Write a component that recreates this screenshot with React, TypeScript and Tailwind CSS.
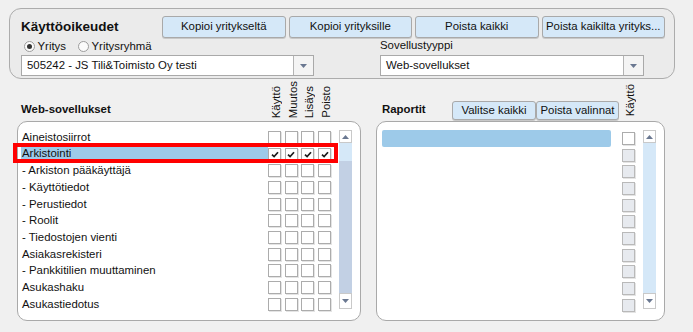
import React from "react";
import clsx from "clsx";

type AppRow = {
  name: string;
  selected?: boolean;
  checks?: boolean[];
};

const APP_ROWS: AppRow[] = [
  { name: "Aineistosiirrot" },
  { name: "Arkistointi", selected: true, checks: [true, true, true, true] },
  { name: "- Arkiston pääkäyttäjä" },
  { name: "- Käyttötiedot" },
  { name: "- Perustiedot" },
  { name: "- Roolit" },
  { name: "- Tiedostojen vienti" },
  { name: "Asiakasrekisteri" },
  { name: "- Pankkitilien muuttaminen" },
  { name: "Asukashaku" },
  { name: "Asukastiedotus" },
];

const RIGHTS = ["Käyttö", "Muutos", "Lisäys", "Poisto"];
const REPORT_ROWS = 11;

const CheckBox = ({ checked, disabled }: { checked?: boolean; disabled?: boolean }) => (
  <span
    className={clsx(
      "flex h-[13px] w-[13px] items-center justify-center border shadow-[1px_1px_0_#e4e4e4]",
      disabled ? "border-[#b9b9b9] bg-[#e7eaef]" : "border-[#acacac] bg-white"
    )}
  >
    {checked && (
      <svg width="8" height="7" viewBox="0 0 8 7">
        <path d="M1 3.6 L3.1 5.6 L7 1.2" fill="none" stroke="#1e1e1e" strokeWidth="1.7" />
      </svg>
    )}
  </span>
);

const Arrow = ({ up, color = "#6a7891" }: { up?: boolean; color?: string }) => (
  <svg width="7" height="4" viewBox="0 0 7 4">
    <path d={up ? "M0 4 L3.5 0 L7 4 Z" : "M0 0 L7 0 L3.5 4 Z"} fill={color} />
  </svg>
);

const Button = ({ label, className }: { label: string; className?: string }) => (
  <button
    className={clsx(
      "flex items-center justify-center whitespace-nowrap rounded-[3px] border border-[#a9a9a9] bg-[#d5e8f8] shadow-[0_1px_0_#c8c8c8]",
      className
    )}
  >
    {label}
  </button>
);

const Select = ({ value, className }: { value: string; className?: string }) => (
  <div className={clsx("flex h-[21px] border border-[#a9a9a9] bg-white", className)}>
    <span className="flex flex-1 items-center pl-[5px]">{value}</span>
    <span className="flex w-[20px] items-center justify-center border-l border-[#b4b4b4] bg-[#f4f4f4]">
      <Arrow />
    </span>
  </div>
);

const Radio = ({ checked, label }: { checked?: boolean; label: string }) => (
  <span className="flex items-center gap-[2.5px]">
    <span className="flex h-[11px] w-[11px] items-center justify-center rounded-full border border-[#9c9c9c] bg-[#fbfbfb]">
      {checked && <span className="h-[5px] w-[5px] rounded-full bg-[#333]" />}
    </span>
    {label}
  </span>
);

const VerticalHeader = ({ label }: { label: string }) => (
  <div className="flex w-[16.7px] items-end justify-center">
    <span className="rotate-180 leading-[9px] [writing-mode:vertical-rl]">{label}</span>
  </div>
);

const ScrollBar = ({ thumbFrom, thumbColor }: { thumbFrom: number; thumbColor: string }) => (
  <div className="flex w-[13px] flex-col">
    <span className="flex h-[13px] items-center justify-center border border-[#c9c9c9] bg-white">
      <Arrow up />
    </span>
    <div className="flex flex-1 flex-col bg-[#d5e8f8]">
      <div style={{ height: thumbFrom }} />
      <div className={clsx("flex-1", thumbColor)} />
    </div>
    <span className="flex h-[16px] items-center justify-center border border-[#c9c9c9] bg-white">
      <Arrow />
    </span>
  </div>
);

export default function App() {
  return (
    <div className="relative h-[332px] w-[693px] overflow-hidden bg-[#f0f0f0] font-['Liberation_Sans',Arial,sans-serif] text-[11.4px] text-[#111]">
      {/* top panel */}
      <div className="ml-[9px] mt-[8px] flex h-[71px] w-[666px] flex-col rounded-[12px] border border-[#acacac] bg-[#ebebeb] pl-[11px] pt-[7px]">
        <div className="flex h-[22px] items-center">
          <span className="w-[141px] text-[13.5px] font-bold">Käyttöoikeudet</span>
          <div className="flex h-full gap-[3px]">
            <Button label="Kopioi yritykseltä" className="w-[123.5px]" />
            <Button label="Kopioi yrityksille" className="w-[123.5px]" />
            <Button label="Poista kaikki" className="w-[123.5px]" />
            <Button label="Poista kaikilta yrityks..." className="w-[123.5px]" />
          </div>
        </div>
        <div className="flex h-[17px] items-center">
          <div className="ml-[3px] flex w-[356px] items-center gap-[12px]">
            <Radio checked label="Yritys" />
            <Radio label="Yritysryhmä" />
          </div>
          <span className="-mt-[2px]">Sovellustyyppi</span>
        </div>
        <div className="flex">
          <Select value="505242 - JS Tili&Toimisto Oy testi" className="w-[293px]" />
          <Select value="Web-sovellukset" className="ml-[66px] w-[264px]" />
        </div>
      </div>

      {/* lists */}
      <div className="mt-[4px] flex gap-[15px] pl-[17px]">
        {/* applications */}
        <div className="flex w-[344px] flex-col">
          <div className="flex h-[38px]">
            <span className="mb-[3px] ml-[4px] w-[247px] self-end text-[11.4px] font-bold">Web-sovellukset</span>
            <div className="mb-[3px] flex">
              {RIGHTS.map((r) => (
                <VerticalHeader key={r} label={r} />
              ))}
            </div>
          </div>
          <div className="flex h-[200px] rounded-[10px] border border-[#a9a9a9] bg-white pt-[7px]">
            <div className="ml-[3px] flex w-[316px] flex-col">
              {APP_ROWS.map((row) => (
                <div key={row.name} className="flex h-[16.7px] items-center">
                  <span
                    className={clsx(
                      "flex h-full w-[247px] items-center pl-[1px]",
                      row.selected && "bg-[#9dcae9]"
                    )}
                  >
                    {row.name}
                  </span>
                  <div className="flex">
                    {RIGHTS.map((r, i) => (
                      <span key={r} className="flex w-[16.7px] justify-start">
                        <CheckBox checked={row.checks?.[i]} />
                      </span>
                    ))}
                  </div>
                </div>
              ))}
            </div>
            <div className="ml-[2px] mt-[1px] mb-[11px] flex">
              <ScrollBar thumbFrom={18} thumbColor="bg-[#c2d0e4]" />
            </div>
          </div>
        </div>

        {/* reports */}
        <div className="flex w-[289px] flex-col">
          <div className="flex h-[38px]">
            <span className="mb-[3px] ml-[6px] w-[70px] self-end font-bold">Raportit</span>
            <div className="mb-[1px] flex h-[19px] self-end">
              <Button label="Valitse kaikki" className="w-[84px]" />
              <Button label="Poista valinnat" className="w-[83px]" />
            </div>
            <div className="mb-[5px] ml-[3px] flex">
              <VerticalHeader label="Käyttö" />
            </div>
          </div>
          <div className="flex h-[200px] rounded-[10px] border border-[#a9a9a9] bg-white pt-[8px]">
            <div className="ml-[5px] flex w-[253px] flex-col">
              {Array.from({ length: REPORT_ROWS }).map((_, i) => (
                <div key={i} className="flex h-[16.7px] items-center">
                  <span className={clsx("h-full w-[229px] rounded-[2px]", i === 0 && "bg-[#9dcae9]")} />
                  <span className="ml-[11px]">
                    <CheckBox disabled={i !== 0} />
                  </span>
                </div>
              ))}
            </div>
            <div className="ml-[8px] mb-[11px] flex">
              <ScrollBar thumbFrom={0} thumbColor="bg-[#d5e8f8]" />
            </div>
          </div>
        </div>
      </div>

      {/* annotation */}
      <div className="absolute left-[13px] top-[143px] h-[20px] w-[325px] border-4 border-[#f00]" />
    </div>
  );
}
